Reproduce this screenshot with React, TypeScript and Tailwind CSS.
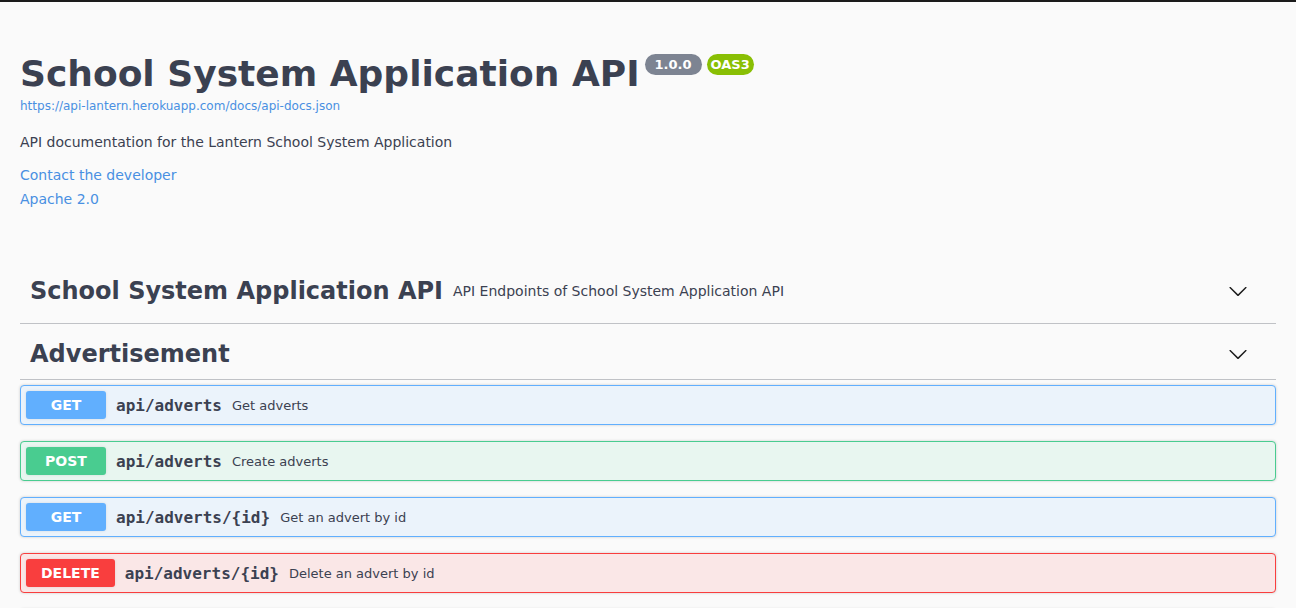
import React from "react";

const sans = { fontFamily: '"DejaVu Sans", sans-serif' };
const mono = { fontFamily: '"DejaVu Sans Mono", monospace' };

function Chevron() {
  return (
    <svg width="20" height="20" viewBox="0 0 20 20" className="fill-[#1b1b1b]">
      <path d="M17.418 6.109c.272-.268.709-.268.979 0s.271.701 0 .969l-7.908 7.83c-.27.268-.707.268-.979 0l-7.908-7.83c-.27-.268-.27-.701 0-.969.271-.268.709-.268.979 0L10 13.25l7.418-7.141z" />
    </svg>
  );
}

type Op = { method: string; path: string; desc: string; border: string; bg: string; badge: string };

const ops: Op[] = [
  { method: "GET", path: "api/adverts", desc: "Get adverts", border: "border-[#61affe]", bg: "bg-[#ebf3fb]", badge: "bg-[#61affe]" },
  { method: "POST", path: "api/adverts", desc: "Create adverts", border: "border-[#49cc90]", bg: "bg-[#e8f6f0]", badge: "bg-[#49cc90]" },
  { method: "GET", path: "api/adverts/{id}", desc: "Get an advert by id", border: "border-[#61affe]", bg: "bg-[#ebf3fb]", badge: "bg-[#61affe]" },
  { method: "DELETE", path: "api/adverts/{id}", desc: "Delete an advert by id", border: "border-[#f93e3e]", bg: "bg-[#fae7e7]", badge: "bg-[#f93e3e]" },
];

function OpBlock({ op }: { op: Op }) {
  return (
    <div className={`mb-[16px] rounded-[4px] border ${op.border} ${op.bg} shadow-[0_0_3px_rgba(0,0,0,0.19)]`}>
      <div className="flex items-center p-[5px]">
        <span className={`min-w-[80px] rounded-[3px] px-[15px] py-[6px] text-center text-[14px] leading-[16px] font-bold text-white shadow-[0_0_3px_rgba(0,0,0,0.1)] ${op.badge}`}>
          {op.method}
        </span>
        <span className="px-[10px] pt-[2px] text-[16px] leading-[20px] font-bold text-[#3b4151]" style={mono}>
          {op.path}
        </span>
        <span className="pt-[2px] text-[13px] text-[#3b4151]">{op.desc}</span>
      </div>
    </div>
  );
}

export default function App() {
  return (
    <div className="h-[608px] overflow-hidden bg-[#fafafa] text-[#3b4151]" style={sans}>
      <div className="h-[2px] bg-[#1b1b1b]" />
      <div className="px-5">
        <div className="pt-[51px]">
          <div className="flex items-start">
            <h2 className="text-[36px] leading-[42px] font-bold text-[#3b4151]">School System Application API</h2>
            <span className="ml-[5px] mt-[1px] flex h-[21px] items-center rounded-full bg-[#7d8492] px-[10px] text-[13px] font-bold text-white">1.0.0</span>
            <span className="ml-[5px] mt-[1px] flex h-[21px] items-center rounded-full bg-[#89bf04] px-[4px] text-[13px] font-bold text-white">OAS3</span>
          </div>
          <a className="mt-[3px] block text-[12px] leading-[16px] text-[#4990e2]">https://api-lantern.herokuapp.com/docs/api-docs.json</a>
          <p className="mt-[18px] text-[14px] leading-[20px]">API documentation for the Lantern School System Application</p>
          <div className="mt-[11px] text-[14px] leading-[24px] text-[#4990e2]">
            <div>Contact the developer</div>
            <div>Apache 2.0</div>
          </div>
        </div>

        <div className="mt-[55px]">
          <div className="flex items-center border-b border-[rgba(59,65,81,0.3)] pl-[10px] pr-[28px] pt-[11px] pb-[18px]">
            <h3 className="text-[24px] leading-[28px] font-bold">School System Application API</h3>
            <span className="flex-1 px-[10px] text-[14px]">API Endpoints of School System Application API</span>
            <Chevron />
          </div>
          <div className="mb-[5px] flex items-center border-b border-[rgba(59,65,81,0.3)] pl-[10px] pr-[28px] pt-[16px] pb-[11px]">
            <h3 className="flex-1 text-[24px] leading-[28px] font-bold">Advertisement</h3>
            <Chevron />
          </div>
          {ops.map((op, i) => (
            <OpBlock key={i} op={op} />
          ))}
          <div className="h-[40px] rounded-[4px] border border-[#e0e0e0] bg-[#fafafa] shadow-[0_0_3px_rgba(0,0,0,0.19)]" />
        </div>
      </div>
    </div>
  );
}
